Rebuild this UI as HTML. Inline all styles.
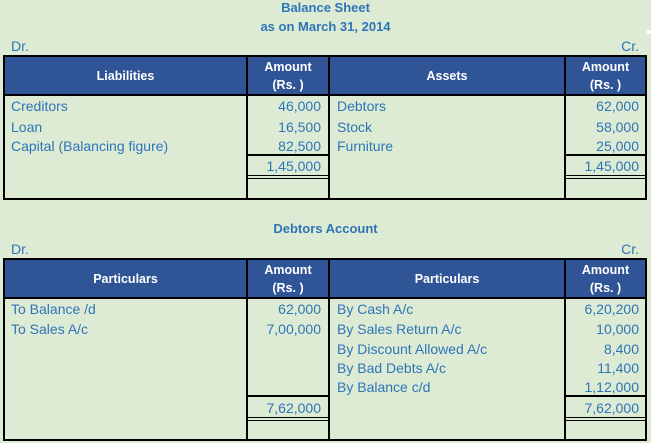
<!DOCTYPE html>
<html><head><meta charset="utf-8"><style>
*{margin:0;padding:0;box-sizing:border-box}
body{width:651px;height:443px;background:#DDEBD5;font-family:"Liberation Sans",sans-serif;font-size:14px;color:#2E75B6;position:relative;overflow:hidden}
.a{position:absolute;white-space:nowrap;line-height:16px}
.b{font-weight:bold;font-size:13px}
.h{position:absolute;background:#2F5597;color:#fff;font-weight:bold;font-size:12.5px;text-align:center}
.v{position:absolute;width:2px;background:#000}
.hl{position:absolute;height:2px;background:#000}
.r{text-align:right}
</style></head><body>
<div class="a b" style="left:0;width:651px;text-align:center;top:0">Balance Sheet</div>
<div class="a b" style="left:0;width:651px;text-align:center;top:19px">as on March 31, 2014</div>
<div style="position:absolute;left:647px;top:30px;width:4px;height:4px;background:#fff"></div>
<div class="a" style="left:11px;top:38px">Dr.</div>
<div class="a" style="right:12px;top:38px">Cr.</div>

<div style="position:absolute;left:3px;top:55px;width:644px;height:145px;border:2px solid #000"></div>
<div class="h" style="left:5px;top:57px;width:241px;height:38px;line-height:38px">Liabilities</div>
<div class="h" style="left:248px;top:57px;width:80px;height:38px;line-height:18px;padding-top:1px">Amount<br>(Rs. )</div>
<div class="h" style="left:330px;top:57px;width:234px;height:38px;line-height:38px">Assets</div>
<div class="h" style="left:566px;top:57px;width:79px;height:38px;line-height:18px;padding-top:1px">Amount<br>(Rs. )</div>
<div class="hl" style="left:3px;top:94px;width:644px"></div>
<div class="v" style="left:246px;top:55px;height:145px"></div>
<div class="v" style="left:328px;top:55px;height:145px"></div>
<div class="v" style="left:564px;top:55px;height:145px"></div>
<div class="hl" style="left:246px;top:154px;width:84px"></div>
<div class="hl" style="left:246px;top:175px;width:84px;height:1px"></div>
<div class="hl" style="left:246px;top:178px;width:84px;height:1px"></div>
<div class="hl" style="left:564px;top:154px;width:83px"></div>
<div class="hl" style="left:564px;top:175px;width:83px;height:1px"></div>
<div class="hl" style="left:564px;top:178px;width:83px;height:1px"></div>
<div class="a" style="left:11px;top:98px">Creditors</div>
<div class="a" style="left:11px;top:119px">Loan</div>
<div class="a" style="left:11px;top:138px">Capital (Balancing figure)</div>
<div class="a r" style="right:330px;top:98px">46,000</div>
<div class="a r" style="right:330px;top:119px">16,500</div>
<div class="a r" style="right:330px;top:138px">82,500</div>
<div class="a r" style="right:330px;top:158px">1,45,000</div>
<div class="a" style="left:337px;top:98px">Debtors</div>
<div class="a" style="left:337px;top:119px">Stock</div>
<div class="a" style="left:337px;top:138px">Furniture</div>
<div class="a r" style="right:12px;top:98px">62,000</div>
<div class="a r" style="right:12px;top:119px">58,000</div>
<div class="a r" style="right:12px;top:138px">25,000</div>
<div class="a r" style="right:12px;top:158px">1,45,000</div>

<div class="a b" style="left:0;width:651px;text-align:center;top:221px">Debtors Account</div>
<div class="a" style="left:11px;top:241px">Dr.</div>
<div class="a" style="right:12px;top:241px">Cr.</div>
<div style="position:absolute;left:3px;top:258px;width:644px;height:183px;border:2px solid #000"></div>
<div class="h" style="left:5px;top:260px;width:241px;height:38px;line-height:38px">Particulars</div>
<div class="h" style="left:248px;top:260px;width:80px;height:38px;line-height:18px;padding-top:1px">Amount<br>(Rs. )</div>
<div class="h" style="left:330px;top:260px;width:234px;height:38px;line-height:38px">Particulars</div>
<div class="h" style="left:566px;top:260px;width:79px;height:38px;line-height:18px;padding-top:1px">Amount<br>(Rs. )</div>
<div class="hl" style="left:3px;top:297px;width:644px"></div>
<div class="v" style="left:246px;top:258px;height:183px"></div>
<div class="v" style="left:328px;top:258px;height:183px"></div>
<div class="v" style="left:564px;top:258px;height:183px"></div>
<div class="hl" style="left:246px;top:395px;width:84px"></div>
<div class="hl" style="left:246px;top:417px;width:84px;height:1px"></div>
<div class="hl" style="left:246px;top:420px;width:84px;height:1px"></div>
<div class="hl" style="left:564px;top:395px;width:83px"></div>
<div class="hl" style="left:564px;top:417px;width:83px;height:1px"></div>
<div class="hl" style="left:564px;top:420px;width:83px;height:1px"></div>
<div class="a" style="left:11px;top:301px">To Balance /d</div>
<div class="a" style="left:11px;top:321px">To Sales A/c</div>
<div class="a r" style="right:330px;top:301px">62,000</div>
<div class="a r" style="right:330px;top:321px">7,00,000</div>
<div class="a r" style="right:330px;top:400px">7,62,000</div>
<div class="a" style="left:337px;top:301px">By Cash A/c</div>
<div class="a" style="left:337px;top:321px">By Sales Return A/c</div>
<div class="a" style="left:337px;top:341px">By Discount Allowed A/c</div>
<div class="a" style="left:337px;top:360px">By Bad Debts A/c</div>
<div class="a" style="left:337px;top:379px">By Balance c/d</div>
<div class="a r" style="right:12px;top:301px">6,20,200</div>
<div class="a r" style="right:12px;top:321px">10,000</div>
<div class="a r" style="right:12px;top:341px">8,400</div>
<div class="a r" style="right:12px;top:360px">11,400</div>
<div class="a r" style="right:12px;top:379px">1,12,000</div>
<div class="a r" style="right:12px;top:400px">7,62,000</div>
</body></html>
